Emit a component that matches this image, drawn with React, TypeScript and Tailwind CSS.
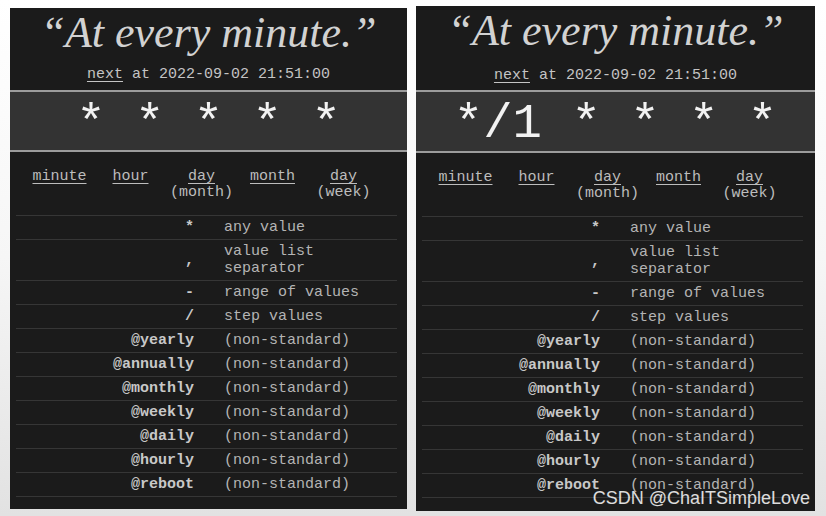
const mono = "font-['Liberation_Mono','Courier_New',monospace]";

const fields = [
  { name: "minute" },
  { name: "hour" },
  { name: "day", sub: "(month)" },
  { name: "month" },
  { name: "day", sub: "(week)" },
];

const rows: { sym: string; desc: string[] }[] = [
  { sym: "*", desc: ["any value"] },
  { sym: ",", desc: ["value list", "separator"] },
  { sym: "-", desc: ["range of values"] },
  { sym: "/", desc: ["step values"] },
  { sym: "@yearly", desc: ["(non-standard)"] },
  { sym: "@annually", desc: ["(non-standard)"] },
  { sym: "@monthly", desc: ["(non-standard)"] },
  { sym: "@weekly", desc: ["(non-standard)"] },
  { sym: "@daily", desc: ["(non-standard)"] },
  { sym: "@hourly", desc: ["(non-standard)"] },
  { sym: "@reboot", desc: ["(non-standard)"] },
];

type PanelProps = {
  expr: string;
  className: string;
  headerH: string;
  nextGap: string;
  bandH: string;
};

const Panel = ({ expr, className, headerH, nextGap, bandH }: PanelProps) => {
  return (
    <div className={`flex flex-col bg-[#1b1b1b] ${mono} ${className}`}>
      {/* header */}
      <div className={`flex flex-col items-center pt-[1px] ${headerH}`}>
        <div className="font-['Liberation_Serif',Georgia,serif] italic text-[44px] leading-[48px] text-[#d2d2d2] whitespace-nowrap">
          “At every minute.”
        </div>
        <div className={`text-[15px] leading-[18px] text-[#c4c4c4] whitespace-pre ${nextGap}`}>
          <span className="underline underline-offset-[3px]">next</span> at 2022-09-02 21:51:00
        </div>
      </div>

      {/* expression */}
      <div className={`border-y-2 border-[#9c9c9c] bg-[#333333] flex justify-center ${bandH}`}>
        <div className="pt-[6px] text-[49px] leading-[52px] text-[#f2f2f2] whitespace-pre">{expr}</div>
      </div>

      {/* field labels */}
      <div className="flex pl-[14px] pt-[17px] pb-[14px] text-[15px] leading-[16px] text-[#bdbdbd]">
        {fields.map((f, i) => (
          <div key={i} className="w-[71px] flex flex-col items-center">
            <span className="underline underline-offset-[3px]">{f.name}</span>
            {f.sub && <span>{f.sub}</span>}
          </div>
        ))}
      </div>

      {/* legend */}
      <div className="mx-[6px] w-[381px] border-t border-[#363636]">
        {rows.map((r) => (
          <div key={r.sym} className="flex items-center border-b border-[#363636] py-[3px] text-[15px] leading-[17px]">
            <div className="w-[178px] text-right font-bold text-[#c8c8c8]">{r.sym}</div>
            <div className="pl-[30px] text-[#b4b4b4]">
              {r.desc.map((d) => (
                <div key={d}>{d}</div>
              ))}
            </div>
          </div>
        ))}
      </div>
    </div>
  );
};

export default function App() {
  return (
    <div className="relative w-[826px] h-[516px] overflow-hidden bg-linear-to-b from-[#ffffff] via-[#f6f6f6] to-[#e2e2e2] flex items-start">
      <Panel
        expr="* * * * *"
        className="ml-[10px] mt-[8px] w-[397px] h-[501px]"
        headerH="h-[82px]"
        nextGap="mt-[9px]"
        bandH="h-[62px]"
      />
      <Panel
        expr="*/1 * * * *"
        className="ml-[9px] mt-[6px] w-[399px] h-[505px]"
        headerH="h-[84px]"
        nextGap="mt-[12px]"
        bandH="h-[63px]"
      />
      <div className="absolute right-[16px] bottom-[7px] font-['Liberation_Sans',Arial,sans-serif] text-[18px] leading-[22px] text-white/85 whitespace-nowrap">
        CSDN @ChaITSimpleLove
      </div>
    </div>
  );
}
